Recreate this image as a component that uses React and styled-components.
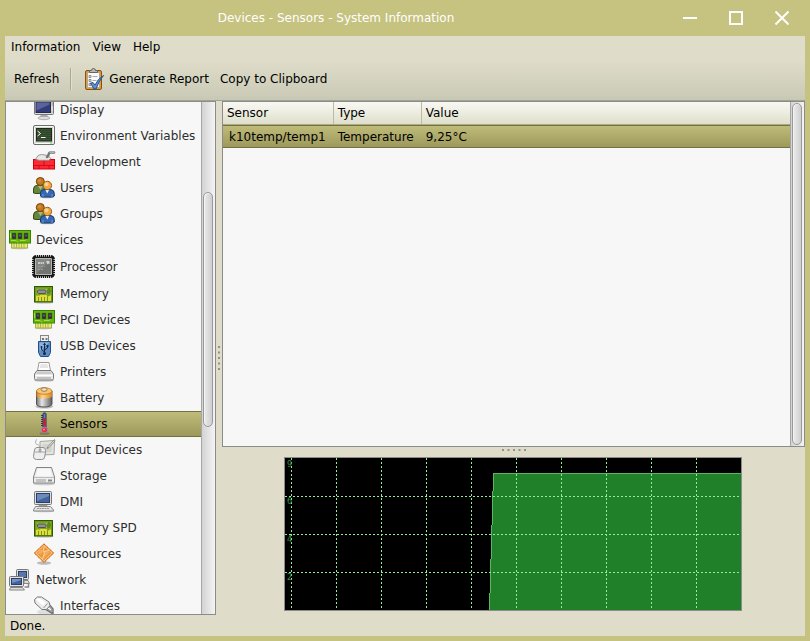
import React, { useState } from 'react'
import styled, { createGlobalStyle } from 'styled-components'

const GlobalStyle = createGlobalStyle`
  * {
    box-sizing: border-box;
  }
  body {
    margin: 0;
    background: #c6c27f;
  }
  body, button, table {
    font-family: "DejaVu Sans", sans-serif;
    font-size: 12px;
    line-height: 16px;
  }
  button {
    border: 0;
    padding: 0;
    background: none;
    color: #000;
    white-space: nowrap;
  }
  svg {
    flex: none;
  }
`

const Window = styled.div`
  display: flex;
  flex-direction: column;
  height: 100vh;
  min-height: 400px;
  padding: 0 5px 5px;
  background: #c6c27f;
`

const TitleBar = styled.header`
  display: flex;
  align-items: center;
  flex: none;
  height: 36px;
`

const Title = styled.h1`
  flex: 1;
  margin: 0;
  color: #fff;
  font-size: 12px;
  font-weight: normal;
  line-height: 16px;
  text-align: center;
`

const WindowButton = styled.button`
  display: flex;
  align-items: center;
  justify-content: center;
  width: 46px;
  height: 38px;
`

const Body = styled.div`
  display: flex;
  flex-direction: column;
  flex: 1;
  min-height: 0;
  background: #dfddc9;
`

const Bars = styled.div`
  flex: none;
  border-bottom: 1px solid #a3a392;
  background: linear-gradient(#dfddc9, #dfddc9 38%, #c8c9b5);
`

const MenuBar = styled.nav`
  display: flex;
  height: 21px;
`

const MenuItem = styled.button`
  padding: 0 6px;
`

const Toolbar = styled.div`
  display: flex;
  align-items: center;
  height: 43px;
  padding: 0 4px;
`

const ToolButton = styled.button`
  display: flex;
  align-items: center;
  gap: 3px;
  padding: 0 6px 0 5px;
`

const ToolSeparator = styled.div`
  width: 2px;
  height: 22px;
  margin: 0 5px;
  border-left: 1px solid #a9a998;
  border-right: 1px solid #e0e0d2;
`

const Panes = styled.main`
  display: flex;
  flex: 1;
  min-height: 0;
`

const Panel = styled.div`
  display: flex;
  flex: ${props => props.$width ? 'none' : '1'};
  width: ${props => props.$width || 'auto'};
  min-height: 0;
  overflow: hidden;
  border: 1px solid #8b8b8b;
  background: #f7f7f7;
`

const Tree = styled.ul`
  flex: 1;
  min-width: 0;
  margin: -5px 0 0;
  padding: 0;
  list-style: none;
`

const TreeRow = styled.button`
  display: flex;
  align-items: center;
  gap: 4px;
  width: 100%;
  height: ${props => props.$tall ? '28px' : '26px'};
  padding-left: ${props => props.$root ? '2px' : '26px'};
  border: solid ${props => props.$selected ? '#74713f' : 'transparent'};
  border-width: 1px 0;
  background: ${props => props.$selected ? 'linear-gradient(#bfbb78, #9d995c)' : 'none'};
  color: ${props => props.$selected ? '#000' : '#2d2d2d'};
`

const ScrollTrack = styled.div`
  display: flex;
  flex: none;
  flex-direction: column;
  width: 14px;
  padding: 1px 2px 1px 1px;
  border-left: 1px solid #a6a6a6;
  background: linear-gradient(90deg, #d3d3d3, #f4f4f4);
`

const ScrollThumb = styled.div`
  flex: 0 0 ${props => props.$size};
  margin-top: ${props => props.$offset};
  border: 1px solid #999;
  border-radius: 5px;
  background: linear-gradient(90deg, #ebebeb, #cfcfcf);
  box-shadow: inset 1px 1px 0 #f3f3f3;
`

const Splitter = styled.div`
  display: flex;
  flex: 0 0 6px;
  align-items: center;
  justify-content: center;
`

const Details = styled.section`
  display: flex;
  flex-direction: column;
  flex: 1;
  min-width: 0;
`

const TableArea = styled.div`
  flex: 1;
  min-width: 0;
`

const Table = styled.table`
  width: 100%;
  border-collapse: separate;
  border-spacing: 0;
  white-space: nowrap;
`

const HeadCell = styled.th`
  height: 23px;
  padding: 0 8px 0 4px;
  border-bottom: 1px solid #a9a98c;
  border-right: 1px solid #bcbca6;
  background: linear-gradient(#f9f9f4, #dfdfcb);
  font-weight: normal;
  text-align: left;

  &:last-child {
    width: 100%;
    border-right: 0;
  }
`

const Cell = styled.td`
  height: 23px;
  padding: 0 8px 0 4px;
  border-top: 1px solid #74713f;
  border-bottom: 1px solid #74713f;
  background: linear-gradient(#bfbb78, #9d995c);

  &:first-child {
    padding-left: 6px;
  }
`

const GraphArea = styled.div`
  display: flex;
  flex: none;
  justify-content: center;
  padding: 4px 1px 4px 0;
`

const GraphFrame = styled.div`
  border: 1px solid #8b8b8b;
  background: #000;

  svg {
    display: block;
  }
`

const StatusBar = styled.footer`
  flex: none;
  height: 21px;
  padding: 3px 5px;
`

const Svg = ({ children }) => (
  <svg width="24" height="24" viewBox="0 0 24 24" aria-hidden="true">{children}</svg>
)

const DisplayIcon = () => (
  <Svg>
    <ellipse cx="12" cy="20" rx="6" ry="1.7" fill="#ddd" stroke="#999" strokeWidth=".7" />
    <path d="M9 16h6l1 3H8z" fill="#aaa" />
    <rect x="2.5" y="2.5" width="19" height="14" rx="1" fill="#deded9" stroke="#777" />
    <rect x="4" y="4" width="14.5" height="10.5" fill="#333c78" stroke="#252a55" />
    <path d="M4.500 4.500h13v2l-13 6z" fill="#5a639d" />
    <path d="M19.500 5h1.500M19.500 7h1.500" stroke="#888" />
    <path d="M19.500 14h1" stroke="#4caf50" />
  </Svg>
)

const TerminalIcon = () => (
  <Svg>
    <rect x="1.500" y="1.500" width="21" height="19" rx="1.500" fill="#d3d6cf" stroke="#6d6f6a" />
    <rect x="2.500" y="2.500" width="19" height="17" rx="1" fill="none" stroke="#fafafa" />
    <rect x="4.500" y="4.500" width="15" height="12.500" fill="#3b5334" stroke="#1c2a1a" />
    <path d="M5 6.500h14M5 8.500h14M5 10.500h14M5 12.500h14M5 14.500h14" stroke="#2c4028" strokeWidth=".7" />
    <path d="M5.500 7l3 2.500-3 2.500M9 13.500h4.500" fill="none" stroke="#fff" />
    <path d="M18 19h2" stroke="#79c64b" />
  </Svg>
)

const DevelopmentIcon = () => (
  <Svg>
    <rect x="1.500" y="9.500" width="21" height="9.500" fill="#fb2b35" stroke="#d4000c" />
    <path d="M2 15.500h20M7 15.500V19M17 15.500V19M12 10v5" stroke="#d4000c" strokeWidth=".8" />
    <path d="M3.500 9.200Q6 4 9.500 4.500l6.500 1 2.800 3.200-2 1.600H7z" fill="#e8e8e6" stroke="#8c8e8a" strokeWidth=".9" />
    <path d="M15 7c2-.5 1-4 3-4.500h4" fill="none" stroke="#777" strokeWidth="2.600" strokeLinecap="round" />
    <path d="M18 2.200h4" stroke="#ccc" strokeLinecap="round" />
  </Svg>
)

const UsersIcon = () => (
  <Svg>
    <path d="M1.500 17v-4q0-3.500 4-3.700h5.500q3 .5 3 4.200v4H4z" fill="#65863c" stroke="#334d18" />
    <path d="M6 10l2.500 4L11 10z" fill="#a9b78a" />
    <circle cx="8.300" cy="5.500" r="4" fill="#c3781e" stroke="#744400" />
    <circle cx="7.500" cy="4.500" r="1.800" fill="#d08a3a" />
    <ellipse cx="15" cy="21" rx="7.500" ry="1.300" fill="#bbb" />
    <path d="M8.500 20v-3q0-3 3.500-3.400h7q3.300.5 3.300 4V20l-2 1H10z" fill="#3569b4" stroke="#183b75" />
    <path d="M13.500 14l1.800 3.500L17 14z" fill="#f5f5f5" />
    <path d="M11 18v3M20 18v3" stroke="#84a9db" strokeWidth=".8" />
    <circle cx="15.400" cy="9.500" r="4.200" fill="#efa842" stroke="#a25e12" />
    <circle cx="14.500" cy="8.300" r="2" fill="#fbd390" />
  </Svg>
)

const CardIcon = () => (
  <Svg>
    <ellipse cx="11.500" cy="20" rx="9" ry="1.500" fill="#ccc" />
    <path d="M3.500 14h16v6h-16z" fill="#e6e78a" stroke="#8ea421" strokeWidth=".8" />
    <path d="M6 15v5M8.500 15v5M11 15v5M13.500 15v5M16 15v5" stroke="#b6b535" />
    <rect x="1.500" y="2.500" width="21" height="12.500" fill="#63b70a" stroke="#398200" />
    <path d="M3 12.500h5l2 2M12 12.500h5l3-2M2.500 5v5" fill="none" stroke="#a9dc3a" />
    <path d="M4 5h4v6H4zM10 5h4v6h-4zM16 5h4v6h-4z" fill="#262d28" stroke="#55703a" strokeWidth=".6" />
    <path d="M5.500 6.500h1v2h-1zM11.500 6.500h1v2h-1zM17.500 6.500h1v2h-1z" fill="#8d938e" />
  </Svg>
)

const ProcessorIcon = () => (
  <Svg>
    <rect x="1.500" y="1.500" width="20" height="20" rx="3" fill="none" stroke="#161616" strokeWidth="3" />
    <path d="M4 .8h16M4 22.200h16M.8 4v16M22.200 4v16" stroke="#fff" strokeWidth="1.200" strokeDasharray="1 1" />
    <rect x="3.500" y="3.500" width="16" height="16" rx="1" fill="#858785" stroke="#b6b7b5" />
    <path d="M4 19L19 4v15z" fill="#727472" />
    <path d="M6 7.500h6M6 8.500h6" stroke="#c9cac8" strokeDasharray="2 .5" />
    <path d="M6 11.500h7M6 14.500h6" stroke="#9b9c9a" strokeDasharray="2 1" />
    <path d="M14 6h3.500v3.500l-1-1-1.500 1V8z" fill="#d4d4d3" />
  </Svg>
)

const MemoryIcon = () => (
  <Svg>
    <ellipse cx="12" cy="20.500" rx="9.500" ry="1.300" fill="#ccc" />
    <rect x="2.500" y="4.500" width="18" height="15.500" fill="#6a9c16" stroke="#315900" />
    <path d="M4 6h15v7H4z" fill="#7ba628" />
    <path d="M4 19v-5.500h4V13h7v2l4-2v6z" fill="#e0dc3a" />
    <path d="M6.500 15v4M9.500 15v4M12.500 15v4M15.500 15v4" stroke="#8b9317" />
    <path d="M5.500 9.500h9" stroke="#d3d3ca" strokeWidth="5" strokeDasharray="1 1" />
    <rect x="5.500" y="8" width="8.500" height="3.500" rx="1" fill="#8f938b" stroke="#4e554a" />
    <path d="M15 9h4M16 7h2M15 11h3" stroke="#446d0c" />
  </Svg>
)

const UsbIcon = () => (
  <Svg>
    <rect x="8.500" y="1.500" width="8" height="6" fill="#eee" stroke="#858585" />
    <path d="M10 4h2v2h-2zM13.500 4h2v2h-2z" fill="#777" />
    <path d="M6.500 7.500h12v11l-2 4h-8l-2-4z" fill="#5c8dc5" stroke="#244f86" />
    <path d="M7.500 8.500h10l-9 8h-1z" fill="#8bb3df" />
    <path d="M12.500 10v10M12.500 18l-3-2.500V13M12.500 16l3-2v-2" fill="none" stroke="#162942" />
    <path d="M12.500 8.500l1.500 2.500h-3z" fill="#162942" />
    <circle cx="12.500" cy="19.500" r="1.500" fill="#162942" />
    <circle cx="9.500" cy="13" r="1" fill="#162942" />
    <path d="M14.500 11h2v2h-2z" fill="#162942" />
  </Svg>
)

const PrinterIcon = () => (
  <Svg>
    <ellipse cx="12" cy="20.500" rx="10" ry="1.300" fill="#ccc" />
    <path d="M5.500 11l1.500-8.500h10L18.500 11z" fill="#fff" stroke="#999" />
    <path d="M8.500 5h7M8 7h8" stroke="#ccc" />
    <path d="M2.500 18.500V14L5 10.500h14l2.500 3.500v4.500q0 1.500-1.500 1.500H4q-1.500 0-1.500-1.500z" fill="#eaeaea" stroke="#777" />
    <path d="M5.500 11.500h13l1.500 2.500H4z" fill="#c9c9c9" />
    <path d="M3.500 15.500h17" stroke="#fff" />
    <path d="M5 18h14" stroke="#999" />
  </Svg>
)

const BatteryIcon = () => (
  <Svg>
    <defs>
      <linearGradient id="cell" x1="0" x2="1">
        <stop offset="0" stopColor="#747474" />
        <stop offset=".35" stopColor="#e6e6e6" />
        <stop offset="1" stopColor="#5d5d5d" />
      </linearGradient>
      <linearGradient id="cap" x1="0" x2="1">
        <stop offset="0" stopColor="#d5841d" />
        <stop offset=".4" stopColor="#ffd491" />
        <stop offset="1" stopColor="#d68720" />
      </linearGradient>
    </defs>
    <ellipse cx="12.300" cy="20.500" rx="9" ry="2" fill="#bbb" />
    <path d="M4.500 5v13c0 4 15.500 4 15.500 0V5z" fill="url(#cell)" stroke="#555" />
    <path d="M4.500 5v5c0 3.500 15.500 3.500 15.500 0V5z" fill="url(#cap)" />
    <ellipse cx="12.250" cy="5" rx="7.750" ry="3.300" fill="#fbc473" stroke="#b36a12" strokeWidth=".7" />
    <ellipse cx="12.200" cy="3.500" rx="3" ry="1.800" fill="#e9e1cf" stroke="#8d6226" strokeWidth=".8" />
  </Svg>
)

const SensorIcon = () => (
  <Svg>
    <ellipse cx="12.500" cy="21.500" rx="5" ry="1.200" fill="#7c7949" />
    <rect x="11" y="1" width="3" height="16" rx="1" fill="#4a87c7" stroke="#292d50" />
    <path d="M12.500 6v12" stroke="#e2142d" strokeWidth="2" />
    <circle cx="12.500" cy="18" r="3" fill="#ee2743" stroke="#8392b9" />
    <circle cx="12" cy="17.500" r="1" fill="#ff929e" />
    <path d="M9 3.500h2M9 5.500h2M9 7.500h2M9 9.500h2M9 11.500h2M9 13.500h2" stroke="#292d50" strokeWidth=".9" />
  </Svg>
)

const InputIcon = () => (
  <Svg>
    <path d="M8 3.500l14.500-1-.5 14-14 .5z" fill="#e4e4df" stroke="#a5a59e" />
    <path d="M10.500 6l9.500-.5-.5 8.500-9 .5z" fill="#d4d4cd" />
    <path d="M22.500 1.500L16 8.500l-1 2 2-1 6-6.500z" fill="#eee" stroke="#777" strokeWidth=".8" />
    <path d="M8 10C8 6 3.500 7 3.500 4.500Q3.500 2 5 1.500" fill="none" stroke="#aaa" />
    <path d="M5 9.500h6q2.500 0 2.700 3l-1 6.500q-.5 2.500-3 2.500H4.500q-3 0-3-3L2.500 12q.5-2.500 2.500-2.500z" fill="#eee" stroke="#8e8e8e" />
    <path d="M2.500 14h10.500M8 10v4" stroke="#aaa" />
    <path d="M7 11h2v3H7z" fill="#bbb" stroke="#888" strokeWidth=".5" />
  </Svg>
)

const StorageIcon = () => (
  <Svg>
    <ellipse cx="12" cy="20" rx="11" ry="1.300" fill="#ccc" />
    <path d="M1.500 13l3-9.500h15l3 9.500v6h-21z" fill="#ededed" stroke="#848484" />
    <path d="M4 12l2-7h12l2 7z" fill="#f8f8f8" />
    <path d="M2 13.500h20" stroke="#bcbcbc" />
    <path d="M4.500 16.500h10" stroke="#999" strokeWidth="3" strokeDasharray="1 1" />
    <path d="M16 16.500h4" stroke="#888" strokeWidth="2" />
  </Svg>
)

const ComputerIcon = () => (
  <Svg>
    <ellipse cx="12" cy="21" rx="10.500" ry="1.300" fill="#ccc" />
    <rect x="2.500" y="1.500" width="17" height="13" rx="1" fill="#e1e1dc" stroke="#777" />
    <rect x="4.500" y="3.500" width="13" height="9" fill="#44629b" stroke="#29416f" />
    <path d="M5 4h12v2L5 11z" fill="#6d8abf" />
    <path d="M7 15h8l1 2H6z" fill="#999" />
    <path d="M3.500 16.500h15l3 3.500v1h-20v-1z" fill="#e4e4e0" stroke="#888" />
    <path d="M5 18.500h12" stroke="#999" strokeDasharray="2 .5" />
  </Svg>
)

const ResourcesIcon = () => (
  <Svg>
    <ellipse cx="12" cy="21" rx="7" ry="1.700" fill="#bbb" />
    <path d="M12 1.800L21.700 11 12 20.500 2.300 11z" fill="#f0a047" stroke="#c65500" strokeDasharray="1.500 .5" />
    <path d="M12 3.500L20 11l-8 7.800L4 11z" fill="#ee973b" stroke="#fad09b" strokeWidth=".8" />
    <path d="M8 7.500l3 1-2 4-3.500-1zM13 9l5 1-4 4-3 3z" fill="#f4ac5c" />
    <path d="M12.500 4.500L11 9l1.500 2-2 6M12 9.500l5-1" fill="none" stroke="#ffe1b5" strokeWidth=".8" />
  </Svg>
)

const NetworkIcon = () => (
  <Svg>
    <rect x="8.500" y="1.500" width="12" height="10" rx="1" fill="#dededa" stroke="#777" />
    <rect x="10.500" y="3.500" width="8" height="6" fill="#5876ad" stroke="#29416f" />
    <path d="M16 12.500h4l1.500 3H16z" fill="#ddd" stroke="#888" />
    <path d="M16.500 19h4v-3" fill="none" stroke="#888" strokeWidth="1.500" />
    <rect x="1.500" y="8.500" width="14" height="10" rx="1" fill="#e2e2de" stroke="#777" />
    <rect x="3.500" y="10.500" width="10" height="6" fill="#44629b" stroke="#29416f" />
    <path d="M4 11h9v1l-9 3z" fill="#7691c4" />
    <path d="M2.500 19.500h12l2 2.500H1.500z" fill="#ddd" stroke="#888" />
  </Svg>
)

const InterfacesIcon = () => (
  <Svg>
    <ellipse cx="13" cy="18" rx="8" ry="2.500" fill="#dedede" />
    <path d="M14 15l6.500 4M17 11l3.500 4v4" fill="none" stroke="#6f6f6f" strokeWidth="2.400" strokeLinecap="round" strokeLinejoin="round" />
    <path d="M15 15l5 3M17.500 12l2.500 3v3" fill="none" stroke="#bbb" strokeWidth=".8" />
    <path d="M2.500 5.500L5.500 3h4l7.500 5 1 3.500-3.500 4H10L3 9z" fill="#ececec" stroke="#777" strokeLinejoin="round" />
    <path d="M4 5.500L6.500 4 14 8.500l-3 3z" fill="#fff" />
    <path d="M15.500 9.500l-4 4.500" stroke="#999" />
  </Svg>
)

const ReportIcon = () => (
  <Svg>
    <rect x="3.500" y="3.500" width="16" height="19" rx="1.500" fill="#d89b3d" stroke="#8a530c" />
    <path d="M5.500 5.500h12v15h-12z" fill="#fafafa" stroke="#999" strokeWidth=".7" />
    <path d="M7.500 5.500v-2h2q0-2 2-2t2 2h2v2z" fill="#b8bab6" stroke="#666" />
    <path d="M7 8.500h2v2H7zM7 12.500h2v2H7zM7 16.500h2v2H7z" fill="#eee" stroke="#777" strokeWidth=".8" />
    <path d="M10.500 9.500h5M10.500 13.500h4M10.500 17.500h3" stroke="#aaa" />
    <path d="M8.500 16l2.500-.5 2 2.500q3-6.500 8.500-9.500-5 6-7.500 13.500h-2z" fill="#5c90d0" stroke="#204a87" strokeWidth=".9" />
  </Svg>
)

const MinimizeIcon = () => (
  <svg width="14" height="14" viewBox="0 0 14 14"><path d="M0 7h14" stroke="#fff" strokeWidth="2" /></svg>
)

const MaximizeIcon = () => (
  <svg width="14" height="14" viewBox="0 0 14 14">
    <rect x="1" y="1" width="12" height="12" fill="none" stroke="#fff" strokeWidth="2" />
  </svg>
)

const CloseIcon = () => (
  <svg width="14" height="14" viewBox="0 0 14 14">
    <path d="M.5.5l13 13M13.500.5l-13 13" stroke="#fff" strokeWidth="2" />
  </svg>
)

const Grip = ({ vertical }) => (
  <svg width={vertical ? 2 : 24} height={vertical ? 24 : 2} aria-hidden="true">
    {[0, 5.5, 11, 16.5, 22].map(pos => (
      <rect key={pos} x={vertical ? 0 : pos} y={vertical ? pos : 0} width="2" height="2" fill="#929289" />
    ))}
  </svg>
)

const treeItems = [
  { name: 'Display', icon: DisplayIcon },
  { name: 'Environment Variables', icon: TerminalIcon },
  { name: 'Development', icon: DevelopmentIcon },
  { name: 'Users', icon: UsersIcon },
  { name: 'Groups', icon: UsersIcon },
  { name: 'Devices', icon: CardIcon, root: true },
  { name: 'Processor', icon: ProcessorIcon, tall: true },
  { name: 'Memory', icon: MemoryIcon },
  { name: 'PCI Devices', icon: CardIcon },
  { name: 'USB Devices', icon: UsbIcon },
  { name: 'Printers', icon: PrinterIcon },
  { name: 'Battery', icon: BatteryIcon },
  { name: 'Sensors', icon: SensorIcon },
  { name: 'Input Devices', icon: InputIcon },
  { name: 'Storage', icon: StorageIcon },
  { name: 'DMI', icon: ComputerIcon },
  { name: 'Memory SPD', icon: MemoryIcon },
  { name: 'Resources', icon: ResourcesIcon },
  { name: 'Network', icon: NetworkIcon, root: true },
  { name: 'Interfaces', icon: InterfacesIcon },
]

const gridColumns = [6, 51, 96, 141, 186, 231, 276, 321, 366, 411]
const gridRows = [38, 76, 114]
const gridLabels = [
  { text: '9', y: 9 },
  { text: '6', y: 46 },
  { text: '4', y: 84 },
  { text: '2', y: 122 },
]

const LoadGraph = () => (
  <GraphFrame>
    <svg width="456" height="152" viewBox="0 0 456 152" role="img" aria-label="Temperature">
      <g shapeRendering="crispEdges">
        <path d="M204 152V135h1v-34h1V67h1V33h1V15h248v137z" fill="#1f8029" />
        <path
          d="M204.500 152V135M205.500 135v-34M206.500 101V67M207.500 67V33M208.500 33V15.500H456"
          fill="none"
          stroke="#5cb564"
        />
        {gridColumns.map(x => (
          <path key={x} d={`M${x + 0.5} 0V150`} stroke="#8cf094" strokeDasharray="2 2" />
        ))}
        {gridRows.map(y => (
          <path key={y} d={`M0 ${y + 0.5}H454`} stroke="#8cf094" strokeDasharray="2 2" />
        ))}
      </g>
      <g fill="#3d8f4c" fontFamily="DejaVu Sans, sans-serif" fontSize="8">
        {gridLabels.map(label => <text key={label.text} x="2" y={label.y}>{label.text}</text>)}
      </g>
    </svg>
  </GraphFrame>
)

const App = () => {
  const [selected, setSelected] = useState('Sensors')

  return (
    <Window>
      <GlobalStyle />
      <TitleBar>
        <Title>Devices - Sensors - System Information</Title>
        <WindowButton aria-label="Minimize"><MinimizeIcon /></WindowButton>
        <WindowButton aria-label="Maximize"><MaximizeIcon /></WindowButton>
        <WindowButton aria-label="Close"><CloseIcon /></WindowButton>
      </TitleBar>
      <Body>
        <Bars>
          <MenuBar>
            <MenuItem>Information</MenuItem>
            <MenuItem>View</MenuItem>
            <MenuItem>Help</MenuItem>
          </MenuBar>
          <Toolbar>
            <ToolButton>Refresh</ToolButton>
            <ToolSeparator />
            <ToolButton><ReportIcon />Generate Report</ToolButton>
            <ToolButton>Copy to Clipboard</ToolButton>
          </Toolbar>
        </Bars>
        <Panes>
          <Panel $width="211px">
            <Tree>
              {treeItems.map(({ name, icon: Icon, root, tall }) => (
                <li key={name}>
                  <TreeRow
                    $root={root}
                    $tall={tall}
                    $selected={name === selected}
                    onClick={() => setSelected(name)}
                  >
                    <Icon />
                    {name}
                  </TreeRow>
                </li>
              ))}
            </Tree>
            <ScrollTrack>
              <ScrollThumb $size="46%" $offset="89px" />
            </ScrollTrack>
          </Panel>
          <Splitter><Grip vertical /></Splitter>
          <Details>
            <Panel>
              <TableArea>
                <Table>
                  <thead>
                    <tr>
                      <HeadCell>Sensor</HeadCell>
                      <HeadCell>Type</HeadCell>
                      <HeadCell>Value</HeadCell>
                    </tr>
                  </thead>
                  <tbody>
                    <tr>
                      <Cell>k10temp/temp1</Cell>
                      <Cell>Temperature</Cell>
                      <Cell>9,25°C</Cell>
                    </tr>
                  </tbody>
                </Table>
              </TableArea>
              <ScrollTrack>
                <ScrollThumb $size="100%" $offset="0" />
              </ScrollTrack>
            </Panel>
            <Splitter><Grip /></Splitter>
            <GraphArea>
              <LoadGraph />
            </GraphArea>
          </Details>
        </Panes>
        <StatusBar>Done.</StatusBar>
      </Body>
    </Window>
  )
}

export default App
